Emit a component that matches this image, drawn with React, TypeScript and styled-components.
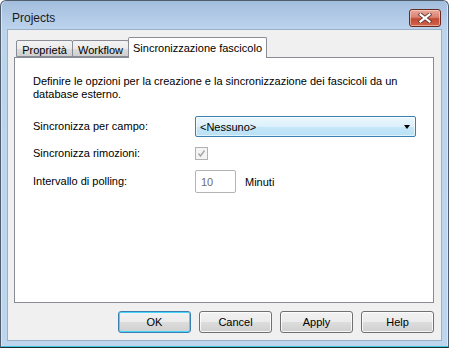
import React from "react";
import styled, { createGlobalStyle } from "styled-components";

const GlobalStyle = createGlobalStyle`
  html, body {
    margin: 0;
    padding: 0;
    width: 449px;
    height: 348px;
    overflow: hidden;
    background: #ffffff;
  }
  * {
    box-sizing: border-box;
  }
`;

const Window = styled.div`
  width: 449px;
  height: 348px;
  display: flex;
  flex-direction: column;
  padding: 0 6px 6px 6px;
  border: 1px solid #4f5d6c;
  border-bottom-color: #1f2c38;
  border-radius: 6px 6px 0 0;
  background: linear-gradient(
    to bottom,
    #a3bedd 0px,
    #b4cce8 18px,
    #bdd4ed 30px,
    #bed5ee 100%
  );
  box-shadow: inset 0 -1px 0 #3fc6dc, inset 1px 0 0 #d7e5f4, inset -1px 0 0 #d7e5f4;
  font-family: "Liberation Sans", Arial, sans-serif;
  font-size: 11px;
  color: #000000;
`;

const TitleBar = styled.div`
  height: 28px;
  display: flex;
  align-items: flex-start;
  flex-shrink: 0;
`;

const Title = styled.div`
  margin: 10px 0 0 5px;
  font-size: 12px;
  line-height: 15px;
  color: #1a1a1a;
`;

const CloseButton = styled.button`
  margin: 8px 1px 0 auto;
  width: 32px;
  height: 18px;
  padding: 0;
  display: flex;
  align-items: center;
  justify-content: center;
  border: 1px solid #6b2a21;
  border-radius: 3px;
  background: linear-gradient(
    to bottom,
    #e9a99c 0%,
    #d98272 45%,
    #c24a35 55%,
    #d0644c 100%
  );
  box-shadow: inset 0 0 0 1px rgba(255, 220, 210, 0.55);
`;

const Client = styled.div`
  flex: 1;
  display: flex;
  flex-direction: column;
  background: #f0f0f0;
  border: 1px solid #9bb0c7;
  padding: 7px 7px 7px 6px;
`;

const TabStrip = styled.div`
  height: 20px;
  display: flex;
  align-items: flex-end;
  padding-left: 2px;
  flex-shrink: 0;
`;

const Tab = styled.div<{ $active?: boolean; $width: number }>`
  width: ${(p) => p.$width}px;
  height: ${(p) => (p.$active ? 21 : 17)}px;
  margin-left: -1px;
  margin-bottom: ${(p) => (p.$active ? -1 : 0)}px;
  position: relative;
  z-index: ${(p) => (p.$active ? 2 : 1)};
  display: flex;
  justify-content: center;
  align-items: center;
  padding-top: ${(p) => (p.$active ? 0 : 2)}px;
  border: 1px solid #898c95;
  border-bottom: ${(p) => (p.$active ? "none" : "1px solid #898c95")};
  border-radius: 2px 2px 0 0;
  background: ${(p) =>
    p.$active
      ? "#ffffff"
      : "linear-gradient(to bottom, #f3f3f3 0%, #ebebeb 50%, #dddddd 51%, #cfcfcf 100%)"};
  white-space: nowrap;
  &:first-child {
    margin-left: 0;
  }
`;

const Panel = styled.div`
  flex: 1;
  background: #ffffff;
  border: 1px solid #898c95;
  padding: 17px 18px 0 18px;
  position: relative;
  z-index: 1;
`;

const Description = styled.p`
  margin: 0 0 15px 0;
  line-height: 13px;
`;

const Form = styled.div`
  display: grid;
  grid-template-columns: 162px auto;
  grid-template-rows: 21px 13px 23px;
  row-gap: 10px;
  align-items: center;
`;

const Label = styled.div`
  line-height: 13px;
`;

const Combo = styled.div`
  width: 221px;
  height: 21px;
  display: flex;
  align-items: center;
  justify-content: space-between;
  padding: 0 4px 0 4px;
  border: 1px solid #3c7fb1;
  border-radius: 2px;
  background: linear-gradient(
    to bottom,
    #ecf7fd 0%,
    #dbf0fc 50%,
    #c6e7f8 51%,
    #b8e0f5 100%
  );
  box-shadow: inset 0 0 0 1px rgba(255, 255, 255, 0.6);
`;

const Arrow = styled.span`
  width: 0;
  height: 0;
  margin-right: 1px;
  border-left: 3.5px solid transparent;
  border-right: 3.5px solid transparent;
  border-top: 4px solid #000000;
`;

const Checkbox = styled.div`
  width: 13px;
  height: 13px;
  border: 1px solid #b1b1b1;
  background: #f4f4f4;
  display: flex;
  align-items: center;
  justify-content: center;
`;

const Inline = styled.div`
  display: flex;
  align-items: center;
  gap: 9px;
`;

const NumberBox = styled.div`
  width: 41px;
  height: 23px;
  border: 1px solid #b4b4b4;
  border-radius: 2px;
  padding-left: 5px;
  display: flex;
  align-items: center;
  color: #6d6d6d;
  background: #ffffff;
`;

const ButtonRow = styled.div`
  display: flex;
  justify-content: flex-end;
  gap: 8px;
  margin-top: 8px;
  flex-shrink: 0;
`;

const Button = styled.button<{ $default?: boolean }>`
  width: 73px;
  height: 22px;
  padding: 0;
  font-family: "Liberation Sans", Arial, sans-serif;
  font-size: 11px;
  color: #000000;
  border: 1px solid ${(p) => (p.$default ? "#3c7fb1" : "#707070")};
  border-radius: 3px;
  background: linear-gradient(
    to bottom,
    #f2f2f2 0%,
    #ebebeb 50%,
    #dddddd 51%,
    #cfcfcf 100%
  );
  box-shadow: inset 0 0 0 1px
    ${(p) => (p.$default ? "#48d5fb" : "rgba(255, 255, 255, 0.8)")};
`;

const CloseGlyph = () => (
  <svg width="14" height="10" viewBox="0 0 14 10">
    <path
      d="M2.5 1.5 L11.5 8.5 M11.5 1.5 L2.5 8.5"
      stroke="#6a3a33"
      strokeWidth="4"
      strokeLinecap="square"
    />
    <path
      d="M2.5 1.5 L11.5 8.5 M11.5 1.5 L2.5 8.5"
      stroke="#ffffff"
      strokeWidth="2.2"
      strokeLinecap="square"
    />
  </svg>
);

const CheckGlyph = () => (
  <svg width="9" height="9" viewBox="0 0 9 9">
    <path
      d="M1.5 4.5 L3.5 7 L7.5 1.5"
      fill="none"
      stroke="#a6a6a6"
      strokeWidth="1.4"
    />
  </svg>
);

export default function App() {
  return (
    <>
      <GlobalStyle />
      <Window>
        <TitleBar>
          <Title>Projects</Title>
          <CloseButton>
            <CloseGlyph />
          </CloseButton>
        </TitleBar>
        <Client>
          <TabStrip>
            <Tab $width={57}>Proprietà</Tab>
            <Tab $width={57}>Workflow</Tab>
            <Tab $width={139} $active>
              Sincronizzazione fascicolo
            </Tab>
          </TabStrip>
          <Panel>
            <Description>
              Definire le opzioni per la creazione e la sincronizzazione dei
              fascicoli da un
              <br />
              database esterno.
            </Description>
            <Form>
              <Label>Sincronizza per campo:</Label>
              <Combo>
                <span>&lt;Nessuno&gt;</span>
                <Arrow />
              </Combo>
              <Label>Sincronizza rimozioni:</Label>
              <Checkbox>
                <CheckGlyph />
              </Checkbox>
              <Label>Intervallo di polling:</Label>
              <Inline>
                <NumberBox>10</NumberBox>
                <span>Minuti</span>
              </Inline>
            </Form>
          </Panel>
          <ButtonRow>
            <Button $default>OK</Button>
            <Button>Cancel</Button>
            <Button>Apply</Button>
            <Button>Help</Button>
          </ButtonRow>
        </Client>
      </Window>
    </>
  );
}
